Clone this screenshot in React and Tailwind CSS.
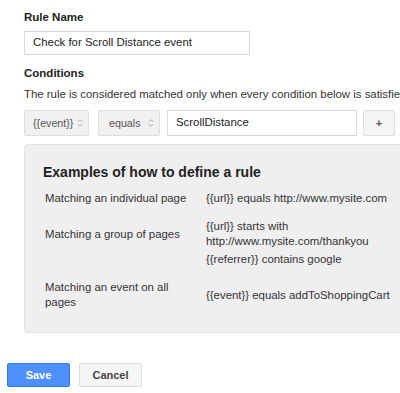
import React from "react";

const Arrows = () => (
  <svg width="6" height="10" viewBox="0 0 6 10" fill="none" stroke="#a8a8a8" strokeWidth="1">
    <path d="M0.8 3.8 L3 1.6 L5.2 3.8" />
    <path d="M0.8 6.2 L3 8.4 L5.2 6.2" />
  </svg>
);

const examples = [
  { label: "Matching an individual page", values: ["{{url}} equals http://www.mysite.com"], mt: "mt-[10px]" },
  { label: "Matching a group of pages", values: ["{{url}} starts with http://www.mysite.com/thankyou"], mt: "mt-[13px]" },
  { label: "", values: ["{{referrer}} contains google"], mt: "mt-[3px]" },
  { label: "Matching an event on all pages", values: ["{{event}} equals addToShoppingCart"], mt: "mt-[13px]" },
];

const App = () => {
  return (
    <div
      className="w-[400px] h-[393px] overflow-hidden bg-white text-[#222]"
      style={{ fontFamily: '"Liberation Sans", Arial, sans-serif' }}
    >
      <div className="pl-[24px] pt-[10px]">
        <div className="text-[11.5px] font-bold leading-[14px]">Rule Name</div>
        <div className="mt-[7px] h-[24px] w-[226px] border border-[#d9d9d9] flex items-center pl-[8px] text-[11.4px]">
          Check for Scroll Distance event
        </div>

        <div className="mt-[11px] text-[11.5px] font-bold leading-[14px]">Conditions</div>
        <p className="mt-[7px] text-[11.4px] leading-[14px] whitespace-nowrap text-[#333]">
          The rule is considered matched only when every condition below is satisfied.
        </p>

        <div className="mt-[9px] flex h-[26px]">
          <div className="w-[65px] h-full border border-[#dedede] bg-[#f1f1f1] rounded-[2px] flex items-center pl-[8px] pr-[5px] justify-between text-[10.7px] text-[#555]">
            <span>{"{{event}}"}</span>
            <Arrows />
          </div>
          <div className="ml-[9px] w-[62px] h-full border border-[#dedede] bg-[#f1f1f1] rounded-[2px] flex items-center pl-[10px] pr-[5px] justify-between text-[10.7px] text-[#555]">
            <span>equals</span>
            <Arrows />
          </div>
          <div className="ml-[7px] w-[190px] h-full border border-[#d9d9d9] flex items-center pl-[8px] text-[11.4px]">
            ScrollDistance
          </div>
          <div className="ml-[6px] w-[32px] h-full border border-[#dedede] bg-[#f5f5f5] rounded-[2px] flex items-center justify-center text-[11px] font-bold text-[#555]">
            +
          </div>
        </div>

        <div className="mt-[8px] w-[400px] border border-[#e2e2e2] bg-[#efefef] rounded-[4px] pt-[18px] pb-[22px]">
          <h2 className="pl-[18px] text-[14px] font-bold leading-[18px] text-[#222]">
            Examples of how to define a rule
          </h2>
          {examples.map((row, i) => (
            <div key={i} className={`${row.mt} pl-[20px] grid grid-cols-[161px_auto] items-center text-[11.4px] leading-[15px] text-[#333]`}>
              <div className="pr-[13px]">{row.label}</div>
              <div className="w-[190px]">
                {row.values.map((v) => (
                  <div key={v}>{v}</div>
                ))}
              </div>
            </div>
          ))}
        </div>
      </div>

      <div className="pl-[7px] mt-[30px] flex gap-[9px]">
        <button
          type="button"
          className="w-[63px] h-[24px] bg-[#4d90fe] border border-[#3079ed] rounded-[2px] text-white text-[11px] font-bold"
        >
          Save
        </button>
        <button
          type="button"
          className="w-[63px] h-[24px] bg-[#f5f5f5] border border-[#dcdcdc] rounded-[2px] text-[#444] text-[11px] font-bold"
        >
          Cancel
        </button>
      </div>
    </div>
  );
};

export default App;
